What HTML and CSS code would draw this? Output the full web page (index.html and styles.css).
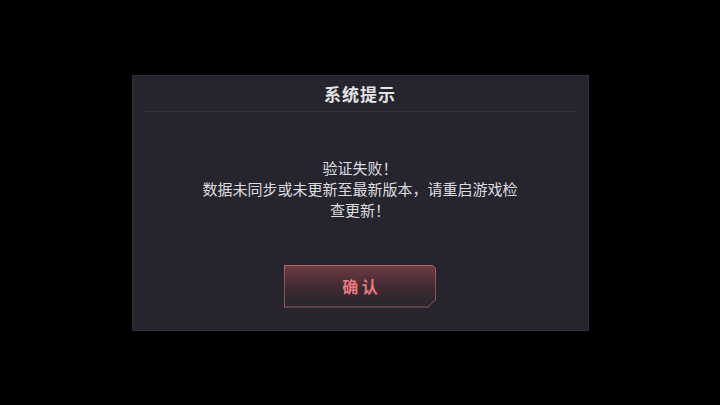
FILE: index.html
```html
<!DOCTYPE html>
<html lang="zh-CN">
<head>
<meta charset="utf-8">
<link rel="stylesheet" href="styles.css">
</head>
<body>
<div class="stage">
  <div class="dialog">
    <div class="header">
      <div class="title">系统提示</div>
    </div>
    <div class="message">
      <p>验证失败！</p>
      <p>数据未同步或未更新至最新版本，请重启游戏检查更新！</p>
    </div>
    <div class="actions">
      <div class="btn">
        <div class="btn-inner">确 认</div>
      </div>
    </div>
  </div>
</div>
</body>
</html>
```

FILE: styles.css
```css
html, body {
  margin: 0;
  padding: 0;
  background: #000;
  width: 720px;
  height: 405px;
  overflow: hidden;
  font-family: "Noto Sans CJK SC", "Noto Sans", sans-serif;
}
.stage {
  width: 720px;
  height: 405px;
  display: flex;
  flex-direction: column;
  align-items: center;
  justify-content: center;
}
.dialog {
  width: 455px;
  height: 254px;
  background: #26252d;
  border: 1px solid #302f38;
  display: flex;
  flex-direction: column;
  align-items: center;
}
.header {
  width: 434px;
  height: 35px;
  border-bottom: 1px solid #2f2e36;
  display: flex;
  align-items: center;
  justify-content: center;
}
.title {
  color: #e4e4e6;
  font-size: 17px;
  font-weight: bold;
  letter-spacing: 1px;
  padding-top: 1px;
}
.message {
  margin-top: 45px;
  width: 322px;
  text-align: center;
  color: #dddde0;
  font-size: 15px;
  line-height: 21px;
}
.message p {
  margin: 0;
}
.actions {
  margin-top: 45px;
}
.btn {
  width: 152px;
  height: 43px;
  background: linear-gradient(#b5636b, #8a4c55 60%, #a0565f);
  clip-path: polygon(0 0, 148px 0, 152px 4px, 152px 35px, 144px 43px, 0 43px);
  padding: 1px;
  box-sizing: border-box;
}
.btn-inner {
  width: 100%;
  height: 100%;
  background: linear-gradient(#6e3a42, #3d2a31 55%, #27262d);
  clip-path: polygon(0 0, 147px 0, 150px 3px, 150px 34px, 143px 41px, 0 41px);
  display: flex;
  align-items: center;
  justify-content: center;
  color: #e8787e;
  font-size: 16px;
  font-weight: bold;
}
```
